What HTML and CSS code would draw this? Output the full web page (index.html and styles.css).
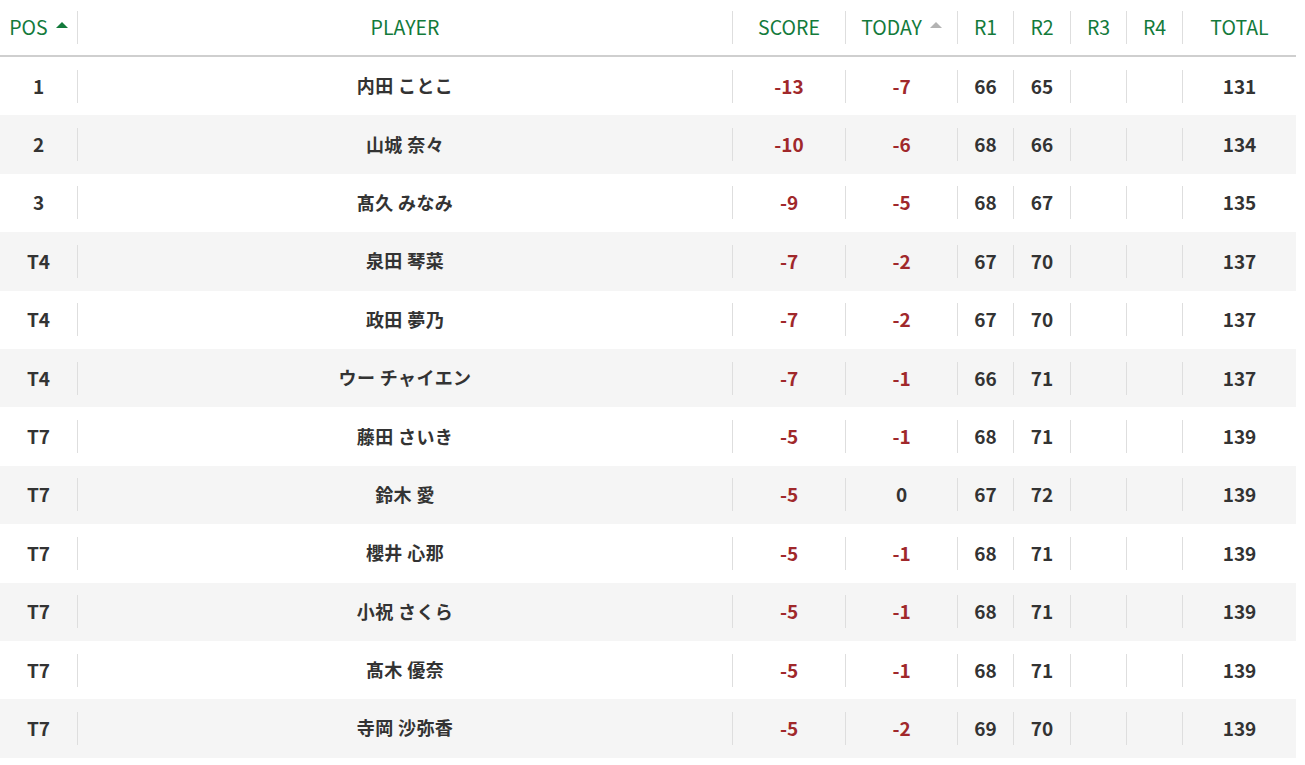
FILE: index.html
```html
<!DOCTYPE html>
<html lang="ja">
<head>
<meta charset="utf-8">
<title>Leaderboard</title>
<link rel="stylesheet" href="styles.css">
</head>
<body>
<div class="board">
  <div class="row head">
    <div class="cell first">POS <span class="tri active"></span></div>
    <div class="cell">PLAYER</div>
    <div class="cell">SCORE</div>
    <div class="cell">TODAY <span class="tri"></span></div>
    <div class="cell">R1</div>
    <div class="cell">R2</div>
    <div class="cell">R3</div>
    <div class="cell">R4</div>
    <div class="cell">TOTAL</div>
  </div>
  <div class="row"><div class="cell first">1</div><div class="cell name">内田 ことこ</div><div class="cell red">-13</div><div class="cell red">-7</div><div class="cell">66</div><div class="cell">65</div><div class="cell"></div><div class="cell"></div><div class="cell">131</div></div>
  <div class="row"><div class="cell first">2</div><div class="cell name">山城 奈々</div><div class="cell red">-10</div><div class="cell red">-6</div><div class="cell">68</div><div class="cell">66</div><div class="cell"></div><div class="cell"></div><div class="cell">134</div></div>
  <div class="row"><div class="cell first">3</div><div class="cell name">髙久 みなみ</div><div class="cell red">-9</div><div class="cell red">-5</div><div class="cell">68</div><div class="cell">67</div><div class="cell"></div><div class="cell"></div><div class="cell">135</div></div>
  <div class="row"><div class="cell first">T4</div><div class="cell name">泉田 琴菜</div><div class="cell red">-7</div><div class="cell red">-2</div><div class="cell">67</div><div class="cell">70</div><div class="cell"></div><div class="cell"></div><div class="cell">137</div></div>
  <div class="row"><div class="cell first">T4</div><div class="cell name">政田 夢乃</div><div class="cell red">-7</div><div class="cell red">-2</div><div class="cell">67</div><div class="cell">70</div><div class="cell"></div><div class="cell"></div><div class="cell">137</div></div>
  <div class="row"><div class="cell first">T4</div><div class="cell name">ウー チャイエン</div><div class="cell red">-7</div><div class="cell red">-1</div><div class="cell">66</div><div class="cell">71</div><div class="cell"></div><div class="cell"></div><div class="cell">137</div></div>
  <div class="row"><div class="cell first">T7</div><div class="cell name">藤田 さいき</div><div class="cell red">-5</div><div class="cell red">-1</div><div class="cell">68</div><div class="cell">71</div><div class="cell"></div><div class="cell"></div><div class="cell">139</div></div>
  <div class="row"><div class="cell first">T7</div><div class="cell name">鈴木 愛</div><div class="cell red">-5</div><div class="cell">0</div><div class="cell">67</div><div class="cell">72</div><div class="cell"></div><div class="cell"></div><div class="cell">139</div></div>
  <div class="row"><div class="cell first">T7</div><div class="cell name">櫻井 心那</div><div class="cell red">-5</div><div class="cell red">-1</div><div class="cell">68</div><div class="cell">71</div><div class="cell"></div><div class="cell"></div><div class="cell">139</div></div>
  <div class="row"><div class="cell first">T7</div><div class="cell name">小祝 さくら</div><div class="cell red">-5</div><div class="cell red">-1</div><div class="cell">68</div><div class="cell">71</div><div class="cell"></div><div class="cell"></div><div class="cell">139</div></div>
  <div class="row"><div class="cell first">T7</div><div class="cell name">髙木 優奈</div><div class="cell red">-5</div><div class="cell red">-1</div><div class="cell">68</div><div class="cell">71</div><div class="cell"></div><div class="cell"></div><div class="cell">139</div></div>
  <div class="row"><div class="cell first">T7</div><div class="cell name">寺岡 沙弥香</div><div class="cell red">-5</div><div class="cell red">-2</div><div class="cell">69</div><div class="cell">70</div><div class="cell"></div><div class="cell"></div><div class="cell">139</div></div>
</div>
</body>
</html>
```

FILE: styles.css
```css
html, body {
  margin: 0;
  padding: 0;
  background: #fff;
}

body {
  font-family: "Noto Sans CJK JP", "Noto Sans", sans-serif;
  color: #333;
}

.board {
  width: 1296px;
}

.row {
  display: grid;
  grid-template-columns: 77px 655px 113px 112px 56px 57px 56px 56px 114px;
  height: 58.4px;
  align-items: center;
  font-weight: 700;
  font-size: 19px;
}

.row:nth-child(odd) {
  background: #f5f5f5;
}

.row.head {
  height: 55px;
  border-bottom: 2px solid #cfcfcf;
  background: #fff;
  font-weight: 400;
  font-size: 19.5px;
  color: #137a3b;
}

.cell {
  box-sizing: border-box;
  height: 33px;
  padding-bottom: 2px;
  display: flex;
  align-items: center;
  justify-content: center;
  border-left: 1px solid #dedede;
  white-space: nowrap;
}

.cell.first {
  border-left: none;
}

.name {
  font-size: 18px;
  letter-spacing: 0.4px;
}

.red {
  color: #a0282b;
}

.tri {
  display: inline-block;
  width: 0;
  height: 0;
  margin-left: 8px;
  margin-bottom: 4px;
  border-left: 6px solid transparent;
  border-right: 6px solid transparent;
  border-bottom: 6px solid #b3b3b3;
}

.tri.active {
  border-bottom-color: #137a3b;
}
```
